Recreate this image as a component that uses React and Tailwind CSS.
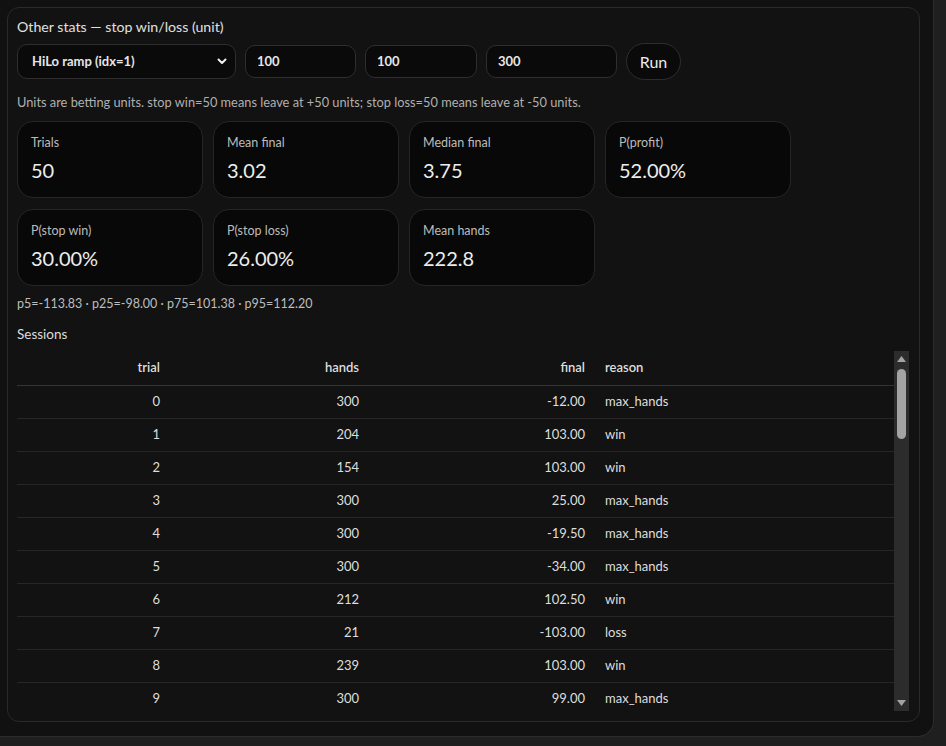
import React from 'react';

const stats = [
    [
        { label: 'Trials', value: '50' },
        { label: 'Mean final', value: '3.02' },
        { label: 'Median final', value: '3.75' },
        { label: 'P(profit)', value: '52.00%' },
    ],
    [
        { label: 'P(stop win)', value: '30.00%' },
        { label: 'P(stop loss)', value: '26.00%' },
        { label: 'Mean hands', value: '222.8' },
    ],
];

const sessions = [
    [0, 300, '-12.00', 'max_hands'],
    [1, 204, '103.00', 'win'],
    [2, 154, '103.00', 'win'],
    [3, 300, '25.00', 'max_hands'],
    [4, 300, '-19.50', 'max_hands'],
    [5, 300, '-34.00', 'max_hands'],
    [6, 212, '102.50', 'win'],
    [7, 21, '-103.00', 'loss'],
    [8, 239, '103.00', 'win'],
    [9, 300, '99.00', 'max_hands'],
];

function StatCard({ label, value }) {
    return (
        <div className="w-[186px] h-[77px] rounded-2xl border border-[#262626] bg-[#080808] px-[13px] pt-[12px]">
            <div className="text-[12.5px] leading-[18px] text-[#bcbcbc]">{label}</div>
            <div className="mt-[4px] text-[20px] leading-[28px] text-[#ededed]">{value}</div>
        </div>
    );
}

function Field({ value, width }) {
    return (
        <div className={`${width} h-[33px] rounded-[10px] border border-[#2e2e2e] bg-[#0a0a0a] flex items-center px-[11px] text-[13px] font-bold text-[#e6e6e6]`}>
            {value}
        </div>
    );
}

export default function App() {
    return (
        <div className="w-full h-[746px] bg-[#1f1f1f] overflow-hidden" style={{ fontFamily: '"Segoe UI", Lato, "Noto Sans", sans-serif' }}>
            <div className="w-[934px] h-[737px] bg-[#111111] border-r border-b border-[#2c2c2c] rounded-br-[16px] pt-[7px] pl-[7px]">
                <div className="w-[913px] h-[715px] rounded-xl border border-[#2a2a2a] bg-[#121212] px-[9px] pt-[9px] flex flex-col">
                    <div className="text-[14.2px] leading-[20px] text-[#e0e0e0]">Other stats — stop win/loss (unit)</div>

                    <div className="mt-[6px] flex items-center gap-[9px] h-[37px]">
                        <div className="w-[219px] h-[35px] rounded-[10px] border border-[#2e2e2e] bg-[#0a0a0a] flex items-center justify-between pl-[14px] pr-[8px] text-[13px] font-bold text-[#e6e6e6]">
                            <span>HiLo ramp (idx=1)</span>
                            <svg width="10" height="7" viewBox="0 0 10 7" fill="none">
                                <path d="M1.5 1.5 L5 5 L8.5 1.5" stroke="#f0f0f0" strokeWidth="2" strokeLinecap="round" strokeLinejoin="round" />
                            </svg>
                        </div>
                        <Field value="100" width="w-[111px]" />
                        <Field value="100" width="w-[112px]" />
                        <Field value="300" width="w-[131px]" />
                        <button className="w-[55px] h-[37px] rounded-full border border-[#2e2e2e] bg-[#0a0a0a] text-[16px] text-[#ececec]">
                            Run
                        </button>
                    </div>

                    <div className="mt-[14px] text-[12.8px] leading-[16px] text-[#b0b0b0]">
                        Units are betting units. stop win=50 means leave at +50 units; stop loss=50 means leave at -50 units.
                    </div>

                    <div className="mt-[11px] flex flex-col gap-[11px]">
                        {stats.map((row, i) => (
                            <div key={i} className="flex gap-[10px]">
                                {row.map((s) => (
                                    <StatCard key={s.label} {...s} />
                                ))}
                            </div>
                        ))}
                    </div>

                    <div className="mt-[10px] text-[12.5px] leading-[16px] text-[#bdbdbd]">
                        p5=-113.83 · p25=-98.00 · p75=101.38 · p95=112.20
                    </div>

                    <div className="mt-[12px] text-[13.5px] leading-[20px] text-[#dcdcdc]">Sessions</div>

                    <div className="mt-[7px] flex h-[360px] overflow-hidden">
                        <div className="w-[877px] overflow-hidden">
                            <table className="w-full border-collapse text-[13px] text-[#dedede]">
                                <thead>
                                    <tr className="h-[34px] border-b border-[#333333]">
                                        <th className="w-[153px] px-[10px] text-right font-semibold">trial</th>
                                        <th className="w-[199px] px-[10px] text-right font-semibold">hands</th>
                                        <th className="w-[226px] px-[10px] text-right font-semibold">final</th>
                                        <th className="px-[10px] text-left font-semibold">reason</th>
                                    </tr>
                                </thead>
                                <tbody>
                                    {sessions.map((r) => (
                                        <tr key={r[0]} className="h-[33px] border-b border-[#262626]">
                                            <td className="px-[10px] text-right">{r[0]}</td>
                                            <td className="px-[10px] text-right">{r[1]}</td>
                                            <td className="px-[10px] text-right">{r[2]}</td>
                                            <td className="px-[10px] text-left">{r[3]}</td>
                                        </tr>
                                    ))}
                                </tbody>
                            </table>
                        </div>
                        <div className="w-[15px] h-full bg-[#2c2c2c] flex flex-col items-center">
                            <svg width="9" height="6" viewBox="0 0 9 6" className="mt-[5px]">
                                <path d="M4.5 0 L9 6 L0 6 Z" fill="#a3a3a3" />
                            </svg>
                            <div className="mt-[7px] w-[9px] h-[70px] rounded-full bg-[#a3a3a3]" />
                            <div className="flex-1" />
                            <svg width="9" height="6" viewBox="0 0 9 6" className="mb-[5px]">
                                <path d="M0 0 L9 0 L4.5 6 Z" fill="#a3a3a3" />
                            </svg>
                        </div>
                    </div>
                </div>
            </div>
        </div>
    );
}
